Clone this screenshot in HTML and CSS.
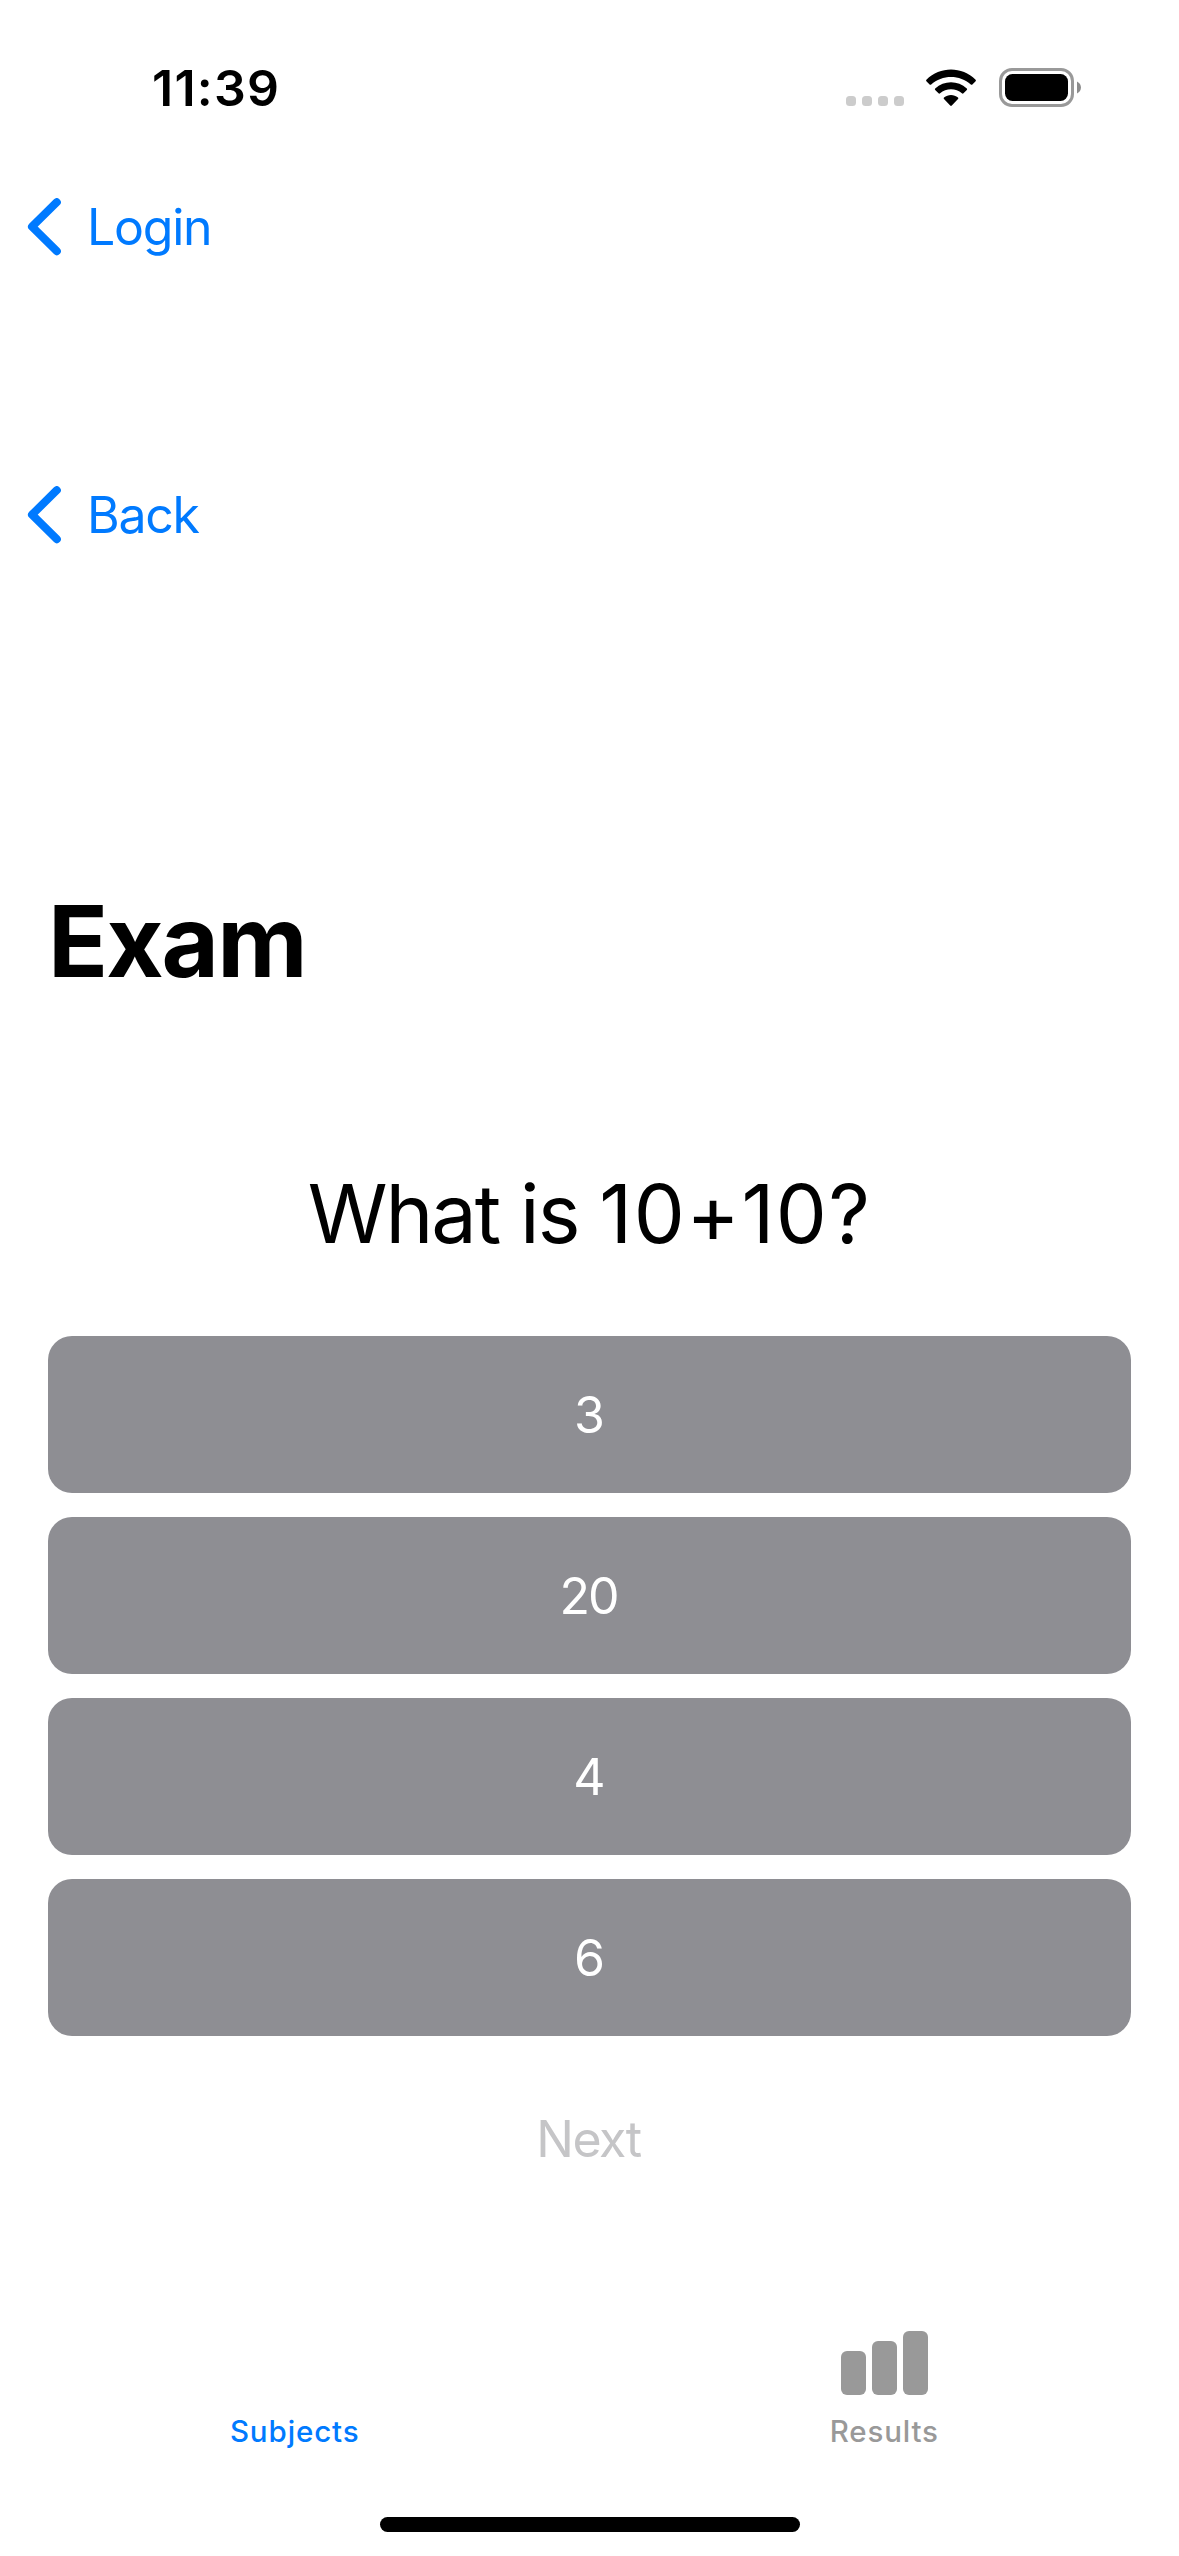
FILE: index.html
```html
<!DOCTYPE html>
<html lang="en">
<head>
  <meta charset="utf-8">
  <title>Exam</title>
  <link rel="stylesheet" href="styles.css">
</head>
<body>
  <div class="screen">
    <header class="status">
      <span class="time">11:39</span>
      <div class="indicators">
        <div class="cellular"><i></i><i></i><i></i><i></i></div>
        <svg class="wifi" width="50" height="38" viewBox="0 0 50 38">
          <path d="M.4 10.7C14-3 36-3 49.600 10.700Q50.300 11.500 49.600 12.200L46.400 15.400Q45.600 16.100 44.800 15.400C34 5.400 16 5.400 5.200 15.400Q4.400 16.100 3.600 15.400L.4 12.200Q-.3 11.500 .4 10.700Z"/>
          <path d="M9.200 19.600C18 11.200 32 11.200 40.800 19.600Q41.500 20.300 40.800 21.100L37.500 24.300Q36.700 25 35.900 24.300C30 19 20 19 14.100 24.300Q13.300 25 12.500 24.300L9.200 21.100Q8.500 20.300 9.200 19.600Z"/>
          <path d="M18 28.500C22 25 28 25 32 28.500Q32.800 29.300 32 30.100L25.800 36.500Q25 37.300 24.200 36.500L18 30.100Q17.200 29.300 18 28.500Z"/>
        </svg>
        <svg class="battery" width="82" height="39" viewBox="0 0 82 39">
          <rect x="1.500" y="1.500" width="72" height="36" rx="11.500" fill="none" stroke="#999" stroke-width="3"/>
          <rect x="6" y="6" width="63" height="27" rx="7.500"/>
          <path d="M78 13.500C83.300 16 83.300 23 78 25.500Z" fill="#8c8c8c"/>
        </svg>
      </div>
    </header>

    <nav class="nav">
      <svg width="34" height="58" viewBox="0 0 34 58"><path d="M29.800 4.200L5 28.700L29.800 53.200"/></svg>
      <span class="login">Login</span>
    </nav>
    <nav class="nav nav-inner">
      <svg width="34" height="58" viewBox="0 0 34 58"><path d="M29.800 4.200L5 28.700L29.800 53.200"/></svg>
      <span class="back">Back</span>
    </nav>

    <main class="exam">
      <h1 class="title">Exam</h1>
      <p class="question">What is <span class="sum">10+10?</span></p>
      <div class="answers">
        <button class="answer">3</button>
        <button class="answer">20</button>
        <button class="answer">4</button>
        <button class="answer">6</button>
      </div>
      <button class="next" disabled>Next</button>
    </main>

    <footer class="tabs">
      <div class="tab tab-active">
        <span class="subjects">Subjects</span>
      </div>
      <div class="tab">
        <div class="bars"><i class="low"></i><i class="mid"></i><i class="high"></i></div>
        <span class="results">Results</span>
      </div>
    </footer>
    <div class="home"></div>
  </div>
</body>
</html>
```
FILE: styles.css
```css
* { box-sizing: border-box; }

body {
  margin: 0;
  background: #fff;
  color: #000;
  font-family: Inter, "Liberation Sans", sans-serif;
}

button {
  border: 0;
  padding: 0;
  background: none;
  font: inherit;
}

.screen {
  display: flex;
  flex-direction: column;
  width: 1179px;
  height: 2556px;
  overflow: hidden;
}

/* Status bar */
.status {
  display: flex;
  justify-content: space-between;
  height: 176px;
  padding: 0 98px 0 152px;
}

.time {
  font-size: 50px;
  font-weight: 600;
  line-height: 176px;
  letter-spacing: 1.25px;
}

.indicators {
  display: flex;
  align-items: flex-start;
  padding-top: 68px;
}

.cellular {
  display: flex;
  gap: 6px;
  margin: 28px 22px 0 0;
}

.cellular i {
  width: 10px;
  height: 10px;
  border-radius: 3.5px;
  background: #ccc;
}

.wifi { margin: 1px 23px 0 0; }

/* Navigation rows */
.nav {
  display: flex;
  align-items: center;
  gap: 26px;
  height: 102px;
  padding-left: 27px;
  color: #007aff;
  font-size: 50px;
  line-height: 102px;
}

.nav svg {
  width: 34px;
  height: 58px;
  fill: none;
  stroke: currentColor;
  stroke-width: 8;
  stroke-linecap: round;
  stroke-linejoin: round;
}

.nav-inner { margin-top: 186px; }
.login { letter-spacing: -1.25px; }
.back { letter-spacing: -1.3px; }

/* Exam content */
.exam {
  display: flex;
  flex-direction: column;
  padding: 315px 48px 0;
}

.title {
  margin: 0;
  font-size: 99px;
  font-weight: 700;
  line-height: 120px;
  letter-spacing: -1.9px;
}

.question {
  margin: 163px 0 72px;
  font-size: 81px;
  line-height: 100px;
  letter-spacing: -2px;
  text-align: center;
}

.sum { letter-spacing: 1.5px; }

.answers {
  display: flex;
  flex-direction: column;
  gap: 24px;
}

.answer {
  height: 157px;
  padding-top: 1px;
  border-radius: 24px;
  background: #8e8e93;
  color: #fff;
  font-size: 50px;
  line-height: 156px;
  letter-spacing: -2px;
  text-indent: -2px;
}

.next {
  margin-top: 73px;
  color: #c5c5c7;
  font-size: 50px;
  line-height: 60px;
  letter-spacing: -1.5px;
  text-indent: -2px;
}

/* Tab bar */
.tabs {
  display: flex;
  height: 127px;
  margin-top: auto;
  color: #999;
  font-size: 29.5px;
  font-weight: 500;
  line-height: 36px;
}

.tab {
  display: flex;
  flex: 1;
  flex-direction: column;
  align-items: center;
  justify-content: flex-end;
  gap: 18px;
  padding-bottom: 9px;
}

.tab-active { color: #007aff; }
.subjects { letter-spacing: 0.9px; }
.results { letter-spacing: 0.85px; }

.bars {
  display: flex;
  align-items: flex-end;
  gap: 6px;
}

.bars i {
  width: 25px;
  border-radius: 6px;
  background: #999;
}

.bars .low { height: 44px; }
.bars .mid { height: 54px; }
.bars .high { height: 64px; }

.home {
  width: 420px;
  height: 15px;
  margin: 59px auto 24px;
  border-radius: 8px;
  background: #000;
}
```
